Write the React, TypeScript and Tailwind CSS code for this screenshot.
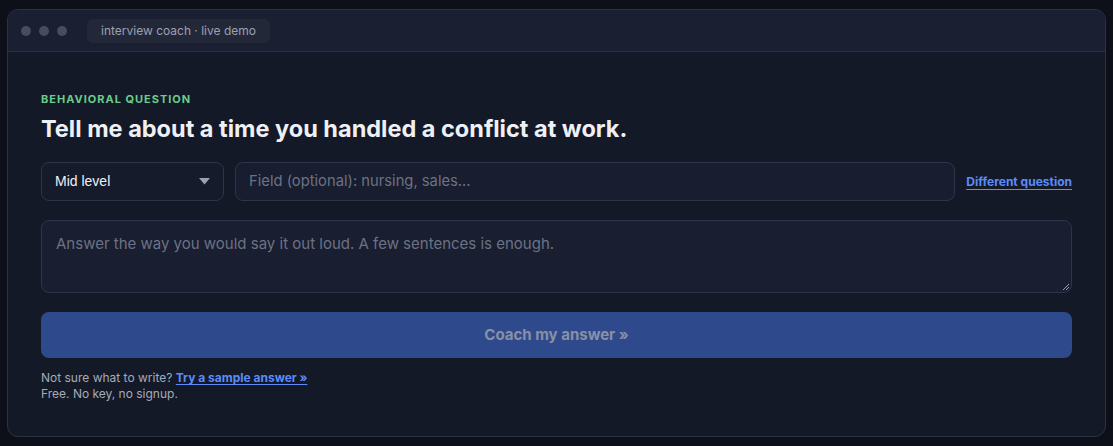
import React from "react";

const sans = { fontFamily: "Inter, 'Noto Sans', sans-serif" };

export default function App() {
  return (
    <div className="w-[1113px] h-[446px] bg-[#0d1019] pt-[9px] px-[7px]" style={sans}>
      <div className="w-[1099px] h-[428px] rounded-[11px] border border-[#2c3245] bg-[#141927] overflow-hidden flex flex-col">
        {/* title bar */}
        <div className="h-[42px] shrink-0 flex items-center border-b border-[#2c3245] bg-[#1a1f31] pl-[13px]">
          <div className="flex gap-[8px]">
            <span className="w-[10px] h-[10px] rounded-full bg-[#474d5e]" />
            <span className="w-[10px] h-[10px] rounded-full bg-[#474d5e]" />
            <span className="w-[10px] h-[10px] rounded-full bg-[#474d5e]" />
          </div>
          <div className="ml-[20px] h-[24px] px-[14px] rounded-[6px] bg-[#232839] flex items-center text-[12px] text-[#9ba1b1]">
            interview coach · live demo
          </div>
        </div>

        {/* body */}
        <div className="flex flex-col px-[33px] pt-[40px]">
          <div className="text-[11px] font-bold tracking-[0.09em] text-[#6bcb8b] leading-[14px]">
            BEHAVIORAL QUESTION
          </div>
          <h1 className="mt-[9px] text-[23.5px] font-bold leading-[28px] text-[#eef0f6]">
            Tell me about a time you handled a conflict at work.
          </h1>

          <div className="mt-[19px] flex items-center gap-[11px]">
            <div className="w-[183px] h-[39px] rounded-[8px] border border-[#2f3548] bg-[#161b2b] flex items-center justify-between pl-[13px] pr-[13px]">
              <span className="text-[14px] text-[#eef0f6]" style={{ fontFamily: "'Liberation Sans', Arial, sans-serif" }}>
                Mid level
              </span>
              <svg width="11" height="7" viewBox="0 0 11 7">
                <path d="M0 0 H11 L5.5 6.5 Z" fill="#9aa0b3" />
              </svg>
            </div>
            <div className="flex-1 h-[39px] rounded-[8px] border border-[#2f3548] bg-[#181d2f] flex items-center px-[13px] text-[14.75px] text-[#6c7284]">
              Field (optional): nursing, sales...
            </div>
            <a className="text-[12px] font-bold text-[#5b8cf7] underline underline-offset-[3px] whitespace-nowrap">
              Different question
            </a>
          </div>

          <div className="relative mt-[19px] h-[73px] rounded-[8px] border border-[#2f3548] bg-[#191e31] px-[14px] pt-[12px] text-[15px] text-[#6c7284]">
            Answer the way you would say it out loud. A few sentences is enough.
            <svg className="absolute right-[2px] bottom-[2px]" width="7" height="7" viewBox="0 0 7 7">
              <path d="M1 7 L7 1 M4 7 L7 4" stroke="#9aa0b3" strokeWidth="1" />
            </svg>
          </div>

          <div className="mt-[19px] h-[46px] rounded-[8px] bg-[#2f4a8c] flex items-center justify-center text-[15px] font-bold text-[#8990a5]">
            Coach my answer »
          </div>

          <div className="mt-[12px] text-[12px] leading-[16px] text-[#a5abb9]">
            Not sure what to write?{" "}
            <a className="font-bold text-[#5b8cf7] underline underline-offset-[2px]">Try a sample answer »</a>
          </div>
          <div className="text-[12px] leading-[16px] text-[#a5abb9]">Free. No key, no signup.</div>
        </div>
      </div>
    </div>
  );
}
